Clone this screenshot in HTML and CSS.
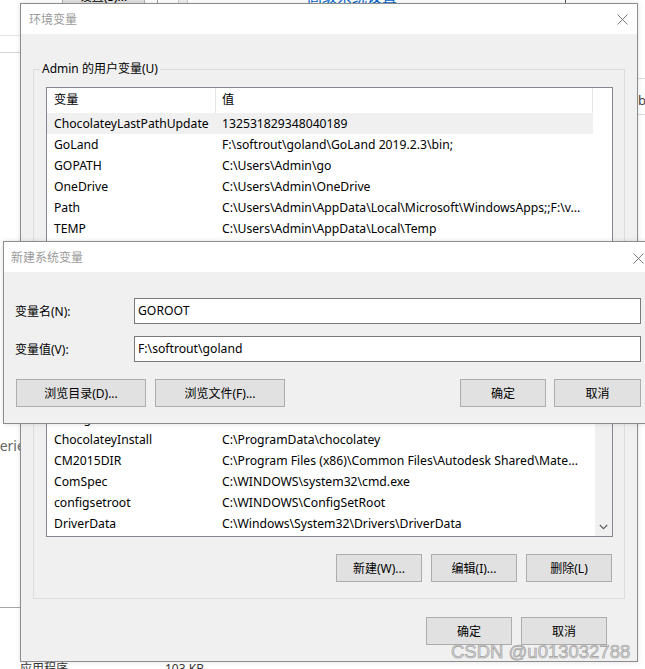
FILE: index.html
```html
<!DOCTYPE html>
<html lang="zh-CN">
<head>
<meta charset="utf-8">
<title>环境变量</title>
<link rel="stylesheet" href="styles.css">
</head>
<body>
<div class="desktop">
  <div class="bg-btn">设置(S)...</div>
  <div class="bg-vline bg-vline-a"></div>
  <div class="bg-scroll"></div>
  <div class="bg-link">高级系统设置</div>
  <div class="bg-vline bg-vline-b"></div>
  <div class="bg-hline bg-hline-l1"></div>
  <div class="bg-hline bg-hline-l2"></div>
  <div class="bg-hline bg-hline-r1"></div>
  <div class="bg-hline bg-hline-r2"></div>
  <div class="bg-text bg-bi">bin</div>
  <div class="bg-text bg-erie">Series</div>
  <div class="bg-hline bg-hline-l3"></div>
  <div class="bg-text bg-app">应用程序</div>
  <div class="bg-text bg-kb">103 KB</div>
</div>

<section class="window win-env">
  <header class="titlebar">
    <span class="title">环境变量</span>
    <svg class="close close-env" width="11" height="11" viewBox="0 0 11 11"><path d="M0.5 0.5L10.5 10.5M10.5 0.5L0.5 10.5" stroke="#7a7a7a" stroke-width="1" fill="none"/></svg>
  </header>
  <div class="env-body">
    <div class="group group-user">
      <span class="group-label">Admin 的用户变量(U)</span>
      <div class="list">
        <div class="list-main">
          <div class="list-head"><div class="col1">变量</div><div class="col2">值</div></div>
          <div class="row selected"><div class="col1">ChocolateyLastPathUpdate</div><div class="col2">132531829348040189</div></div>
          <div class="row"><div class="col1">GoLand</div><div class="col2">F:\softrout\goland\GoLand 2019.2.3\bin;</div></div>
          <div class="row"><div class="col1">GOPATH</div><div class="col2">C:\Users\Admin\go</div></div>
          <div class="row"><div class="col1">OneDrive</div><div class="col2">C:\Users\Admin\OneDrive</div></div>
          <div class="row"><div class="col1">Path</div><div class="col2">C:\Users\Admin\AppData\Local\Microsoft\WindowsApps;;F:\v...</div></div>
          <div class="row"><div class="col1">TEMP</div><div class="col2">C:\Users\Admin\AppData\Local\Temp</div></div>
        </div>
        <div class="list-strip"></div>
      </div>
      <div class="btn-row">
        <button class="btn">新建(N)...</button>
        <button class="btn">编辑(E)...</button>
        <button class="btn">删除(D)</button>
      </div>
    </div>

    <div class="group group-sys">
      <span class="group-label">系统变量(S)</span>
      <div class="list">
        <div class="list-main">
          <div class="list-head"><div class="col1">变量</div><div class="col2">值</div></div>
          <div class="row"><div class="col1">asl.log</div><div class="col2">Destination=file</div></div>
          <div class="row"><div class="col1">ChocolateyInstall</div><div class="col2">C:\ProgramData\chocolatey</div></div>
          <div class="row"><div class="col1">CM2015DIR</div><div class="col2">C:\Program Files (x86)\Common Files\Autodesk Shared\Mate...</div></div>
          <div class="row"><div class="col1">ComSpec</div><div class="col2">C:\WINDOWS\system32\cmd.exe</div></div>
          <div class="row"><div class="col1">configsetroot</div><div class="col2">C:\WINDOWS\ConfigSetRoot</div></div>
          <div class="row"><div class="col1">DriverData</div><div class="col2">C:\Windows\System32\Drivers\DriverData</div></div>
        </div>
        <div class="scrollbar">
          <div class="scroll-track"></div>
          <div class="scroll-arrow">
            <svg width="9" height="6" viewBox="0 0 9 6"><path d="M0.8 1L4.5 4.6L8.2 1" stroke="#606060" stroke-width="1.2" fill="none"/></svg>
          </div>
        </div>
      </div>
      <div class="btn-row">
        <button class="btn">新建(W)...</button>
        <button class="btn">编辑(I)...</button>
        <button class="btn">删除(L)</button>
      </div>
    </div>

    <div class="btn-row dialog-actions">
      <button class="btn">确定</button>
      <button class="btn">取消</button>
    </div>
  </div>
</section>

<section class="window win-new">
  <header class="titlebar">
    <span class="title">新建系统变量</span>
    <svg class="close close-new" width="11" height="11" viewBox="0 0 11 11"><path d="M0.5 0.5L10.5 10.5M10.5 0.5L0.5 10.5" stroke="#7a7a7a" stroke-width="1" fill="none"/></svg>
  </header>
  <div class="new-body">
    <div class="field">
      <label class="field-label">变量名(N):</label>
      <div class="input">GOROOT</div>
    </div>
    <div class="field">
      <label class="field-label">变量值(V):</label>
      <div class="input">F:\softrout\goland</div>
    </div>
    <div class="new-actions">
      <button class="btn btn-wide">浏览目录(D)...</button>
      <button class="btn btn-wide">浏览文件(F)...</button>
      <span class="spacer"></span>
      <button class="btn">确定</button>
      <button class="btn btn-cancel">取消</button>
    </div>
  </div>
</section>

<div class="watermark">CSDN @u013032788</div>
</body>
</html>
```

FILE: styles.css
```css
* { box-sizing: border-box; }
html, body { margin: 0; padding: 0; }
body {
  position: relative;
  width: 645px;
  height: 669px;
  overflow: hidden;
  background: #fff;
  font-family: "Noto Sans", "Noto Sans CJK SC", sans-serif;
  font-size: 12px;
  color: #000;
}

/* ---------- desktop behind the windows ---------- */
.desktop { position: absolute; inset: 0; }
.bg-btn {
  position: absolute; left: 62px; top: -16px; width: 83px; height: 26px;
  background: #e1e1e1; border: 1px solid #adadad;
  display: flex; align-items: center; justify-content: center;
  font-size: 12px; line-height: 14px;
}
.bg-vline { position: absolute; top: 0; width: 1px; height: 6px; background: #a0a0a0; }
.bg-vline-a { left: 157px; }
.bg-vline-b { left: 565px; background: #555; }
.bg-scroll { position: absolute; left: 178px; top: 0; width: 10px; height: 6px; background: #f0f0f0; border-left: 1px solid #c8c8c8; border-right: 1px solid #c8c8c8; }
.bg-link { position: absolute; left: 307px; top: -14px; font-size: 15px; line-height: 20px; color: #0066cc; }
.bg-hline { position: absolute; height: 1px; background: #dadada; }
.bg-hline-l1 { left: 0; top: 35px; width: 20px; background: #e6e6e6; }
.bg-hline-l2 { left: 0; top: 52px; width: 20px; background: #d6d6d6; }
.bg-hline-r1 { left: 637px; top: 78px; width: 8px; }
.bg-hline-r2 { left: 637px; top: 114px; width: 8px; }
.bg-hline-l3 { left: 0; top: 607px; width: 20px; background: #a8a8a8; }
.bg-text { position: absolute; white-space: nowrap; }
.bg-bi { left: 638px; top: 91px; font-size: 13px; line-height: 18px; color: #444; }
.bg-erie { left: -8px; top: 436px; font-size: 14px; line-height: 20px; color: #666; }
.bg-app { left: 20px; top: 661px; font-size: 12px; line-height: 16px; color: #333; }
.bg-kb { left: 165px; top: 661px; font-size: 12px; line-height: 16px; color: #333; }

/* ---------- windows ---------- */
.window {
  position: absolute;
  border: 1px solid #8c8c8c;
  background: #f0f0f0;
  display: flex;
  flex-direction: column;
  box-shadow: 0 0 5px rgba(0, 0, 0, 0.12);
}
.titlebar {
  height: 30px;
  flex-shrink: 0;
  background: #fff;
  display: flex;
  align-items: center;
  justify-content: space-between;
  color: #9a9a9a;
  font-size: 12px;
}
.close { display: block; flex-shrink: 0; }

.btn {
  height: 28px;
  width: 86px;
  padding: 0;
  margin: 0;
  background: #e1e1e1;
  border: 1px solid #adadad;
  font-family: inherit;
  font-size: 12px;
  color: #000;
  display: flex;
  align-items: center;
  justify-content: center;
}
.btn-row {
  display: flex;
  justify-content: flex-end;
  gap: 9px;
}

/* ---------- environment variables window ---------- */
.win-env { left: 20px; top: 3px; width: 618px; height: 659px; }
.win-env .titlebar { padding-left: 8px; }
.close-env { margin-right: 9px; }
.env-body {
  flex: 1;
  padding: 35px 12px 0 12px;
  display: flex;
  flex-direction: column;
}
.group {
  position: relative;
  border: 1px solid #dcdcdc;
  padding: 17px 11px 16px 12px;
}
.group .btn-row { margin-top: 17px; margin-right: 1px; }
.group-sys { margin-top: 60px; }
.group-label {
  position: absolute;
  left: 6px;
  top: -9px;
  padding: 0 2px;
  line-height: 16px;
  background: #f0f0f0;
  white-space: nowrap;
}

.list {
  height: 155px;
  border: 1px solid #828790;
  background: #fff;
  display: flex;
  overflow: hidden;
  font-size: 12.2px;
}
.list-main { flex: 1; min-width: 0; display: flex; flex-direction: column; }
.list-head { height: 25px; flex-shrink: 0; display: flex; align-items: stretch; border-right: 1px solid #e5e5e5; }
.list-head .col1, .list-head .col2 { line-height: 24px; }
.list-head .col2 { border-left: 1px solid #e5e5e5; padding-left: 6px; }
.row { height: 21px; flex-shrink: 0; display: flex; line-height: 21px; }
.row.selected { background: #f0f0f0; }
.col1 { width: 168px; flex-shrink: 0; padding-left: 7px; white-space: nowrap; overflow: hidden; }
.col2 { flex: 1; min-width: 0; padding-left: 7px; white-space: nowrap; overflow: hidden; }
.list-strip { width: 19px; flex-shrink: 0; background: #fff; }

.scrollbar { width: 17px; flex-shrink: 0; background: #f0f0f0; display: flex; flex-direction: column; }
.scroll-track { flex: 1; }
.scroll-arrow { height: 18px; display: flex; align-items: center; justify-content: center; }
.scroll-arrow svg { display: block; }

.dialog-actions { margin-top: 18px; padding-right: 18px; }

/* ---------- new system variable window ---------- */
.win-new { left: 3px; top: 241px; width: 660px; height: 183px; }
.win-new .titlebar { padding-left: 7px; }
.close-new { margin-right: 18px; margin-top: 2px; }
.new-body {
  flex: 1;
  padding: 26px 21px 0 11px;
  display: flex;
  flex-direction: column;
  gap: 12px;
}
.field { display: flex; align-items: center; }
.field-label { width: 119px; flex-shrink: 0; }
.input {
  flex: 1;
  height: 26px;
  border: 1px solid #7a7a7a;
  background: #fff;
  padding-left: 3px;
  line-height: 24px;
  white-space: nowrap;
  font-size: 12.2px;
}
.new-actions { display: flex; gap: 9px; margin-top: 5px; padding-left: 1px; }
.btn-wide { width: 130px; }
.btn-cancel { width: 87px; margin-left: -1px; }
.spacer { flex: 1; }

.watermark {
  position: absolute;
  left: 451px;
  top: 641px;
  font-family: "Liberation Sans", sans-serif;
  font-size: 18.5px;
  line-height: 22px;
  color: #d6d6d6;
  -webkit-text-stroke: 0.6px #9c9c9c;
  white-space: nowrap;
}
```
